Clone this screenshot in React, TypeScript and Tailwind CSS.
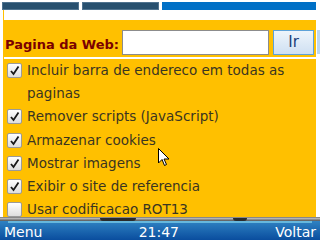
import React from 'react';

const items = [
  { label: 'Incluir barra de endereco em todas as paginas', checked: true },
  { label: 'Remover scripts (JavaScript)', checked: true },
  { label: 'Armazenar cookies', checked: true },
  { label: 'Mostrar imagens', checked: true },
  { label: 'Exibir o site de referencia', checked: true },
  { label: 'Usar codificacao ROT13', checked: false },
];

function Check({ checked }: { checked: boolean }) {
  return (
    <div className="w-[15px] h-[15px] shrink-0 mt-[4px] rounded-[2px] border border-[#9a9a9a] bg-gradient-to-b from-white to-[#dedede] flex items-center justify-center">
      {checked && (
        <svg width="11" height="11" viewBox="0 0 11 11">
          <path d="M2 6 L4.5 9 L9.5 1.5" stroke="#1a1a1a" strokeWidth="1.8" fill="none" />
        </svg>
      )}
    </div>
  );
}

export default function App() {
  return (
    <div className="relative w-[320px] h-[240px] overflow-hidden bg-white flex flex-col font-['DejaVu_Sans',sans-serif]">
      {/* tabs */}
      <div className="flex h-[10px] pt-[2px] gap-[3px] pl-[2px] pr-[4px] shrink-0">
        <div className="w-[77px] bg-[#27506f] border border-[#4f7390]" />
        <div className="w-[77px] bg-[#27506f] border border-[#4f7390]" />
        <div className="flex-1 bg-[#0070c6]" />
      </div>

      <div className="flex flex-1 min-h-0">
        <div className="w-[3px]" />
        <div className="w-[313px] flex flex-col border-l border-[#ffc000]">
          <div className="h-[10px] bg-white shrink-0" />
          <div className="flex-1 bg-[#ffc000] overflow-hidden">
            <div className="flex items-center h-[37px] pt-[8px] pl-[1px] gap-[3px]">
              <span className="whitespace-nowrap shrink-0 mt-[5px] text-[13px] font-bold text-[#7a0000]">Pagina da Web:</span>
              <div className="w-[147px] h-[25px] shrink-0 bg-white border border-[#8c8c8c]" />
              <button className="w-[41px] h-[25px] shrink-0 ml-[1px] border border-[#5ea2d8] bg-gradient-to-b from-[#eef5fb] to-[#cfe0f2] text-[15px] text-[#1b3f7a]">
                Ir
              </button>
            </div>
            <div className="h-[2px] bg-white" />
            <div className="flex flex-col pl-[3px]">
              {items.map((it) => (
                <div key={it.label} className="flex gap-[5px] items-start">
                  <Check checked={it.checked} />
                  <span className="text-[13.5px] leading-[23.2px] text-[#3a3520] w-[270px]">{it.label}</span>
                </div>
              ))}
            </div>
          </div>
        </div>
        <div className="w-[4px] flex flex-col">
          <div className="h-[20px]" />
          <div className="h-[24px] ml-[1px] bg-[#bcd7ef]" />
        </div>
      </div>

      {/* soft key bar */}
      <div className="h-[23px] shrink-0 flex flex-col">
        <div className="h-[4px] flex bg-gradient-to-b from-[#c8c8c8] to-[#555] border-t border-[#888]">
          <div className="w-[100px]" />
          <div className="w-[36px] bg-[#2a2a2a] rounded-b-[3px]" />
          <div className="w-[97px]" />
          <div className="w-[14px] bg-[#2a2a2a] rounded-b-[4px]" />
        </div>
        <div className="flex-1 flex flex-col bg-gradient-to-b from-[#2f82c2] to-[#0a4d9e]">
          <div className="h-[2px] mx-[8px] bg-[#7fd0e8] opacity-70" />
          <div className="flex-1 flex items-center justify-between px-[4px] text-white text-[14px] leading-none">
            <span>Menu</span>
            <span>21:47</span>
            <span>Voltar</span>
          </div>
        </div>
      </div>

      {/* cursor */}
      <svg className="absolute left-[158px] top-[148px]" width="13" height="20" viewBox="0 0 13 20">
        <path d="M0.5 0.5 L0.5 15 L4 11.5 L6.5 17.5 L8.5 16.5 L6 11 L11 11 Z" fill="white" stroke="black" strokeWidth="1" />
      </svg>
    </div>
  );
}
